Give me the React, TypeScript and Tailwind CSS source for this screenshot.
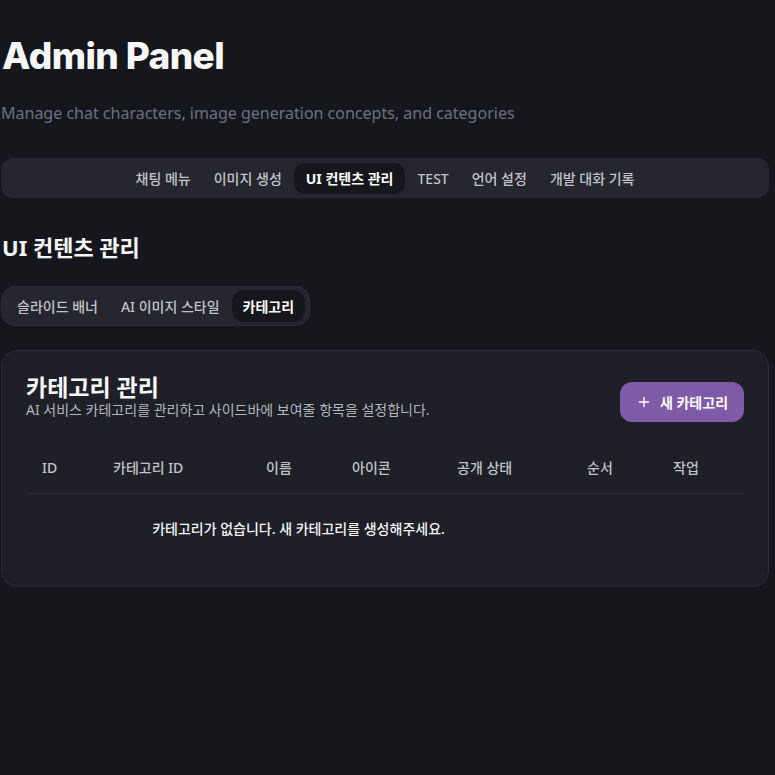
import { Plus } from 'lucide-react';

const mainTabs = ['채팅 메뉴', '이미지 생성', 'UI 컨텐츠 관리', 'TEST', '언어 설정', '개발 대화 기록'];
const subTabs = ['슬라이드 배너', 'AI 이미지 스타일', '카테고리'];
const columns = [
  { label: 'ID', w: 'w-[71px]' },
  { label: '카테고리 ID', w: 'w-[153px]' },
  { label: '이름', w: 'w-[86px]' },
  { label: '아이콘', w: 'w-[105px]' },
  { label: '공개 상태', w: 'w-[130px]' },
  { label: '순서', w: 'w-[86px]' },
  { label: '작업', w: 'w-[87px]' },
];

export default function App() {
  return (
    <div className="min-h-[775px] w-full bg-[#16171d] font-['Noto_Sans','Noto_Sans_CJK_KR',sans-serif] text-white">
      <div className="pl-[1px] pr-[6px] pt-[34px]">
        {/* Header */}
        <h1 className="ml-[1px] font-['Inter','Noto_Sans_CJK_KR',sans-serif] text-[37px] font-extrabold leading-[44px] tracking-[-0.6px] text-[#f7f7f8]">
          Admin Panel
        </h1>
        <p className="mt-[24px] text-[16px] leading-[22px] text-[#6b7180]">
          Manage chat characters, image generation concepts, and categories
        </p>

        {/* Main tabs */}
        <div className="mt-[34px] flex h-[40px] items-center justify-center gap-[1px] rounded-[12px] bg-[#25262f]">
          {mainTabs.map((t) => (
            <div
              key={t}
              className={
                t === 'UI 컨텐츠 관리'
                  ? 'flex h-[31px] items-center rounded-[10px] bg-[#16171d] px-[12px] text-[14px] font-bold text-white'
                  : 'flex h-[31px] items-center px-[11px] text-[14px] font-medium text-[#c2c3c9]'
              }
            >
              {t}
            </div>
          ))}
        </div>

        {/* Section heading */}
        <h2 className="mt-[34px] ml-[1px] text-[22px] font-bold leading-[30px] text-[#f7f7f8]">UI 컨텐츠 관리</h2>

        {/* Sub tabs */}
        <div className="mt-[24px] inline-flex h-[40px] items-center gap-[1px] rounded-[14px] border border-[#2c2d37] bg-[#25262f] px-[4px]">
          {subTabs.map((t) => (
            <div
              key={t}
              className={
                t === '카테고리'
                  ? 'flex h-[32px] items-center rounded-[12px] bg-[#16171d] px-[11px] text-[14px] font-bold text-white'
                  : 'flex h-[32px] items-center px-[11px] text-[14px] font-medium text-[#c2c3c9]'
              }
            >
              {t}
            </div>
          ))}
        </div>

        {/* Card */}
        <div className="mt-[24px] h-[237px] rounded-[16px] border border-[#2b2c36] bg-[#1e1f27] px-[24px] pt-[22px]">
          <div className="flex items-start justify-between">
            <div>
              <h3 className="text-[23px] font-bold leading-[28px] text-[#f7f7f8]">카테고리 관리</h3>
              <p className="text-[14px] leading-[18px] text-[#b4b5bd]">
                AI 서비스 카테고리를 관리하고 사이드바에 보여줄 항목을 설정합니다.
              </p>
            </div>
            <button className="mt-[9px] flex h-[40px] w-[124px] items-center justify-center gap-[8px] rounded-[12px] bg-[#7f5aa6] text-[14px] font-bold text-white">
              <Plus className="h-[16px] w-[16px]" strokeWidth={2} />
              새 카테고리
            </button>
          </div>

          <table className="mt-[21px] w-full table-fixed border-collapse">
            <thead>
              <tr className="border-b border-[#2b2c36]">
                {columns.map((c) => (
                  <th key={c.label} className={`${c.w} h-[50px] px-[16px] text-left text-[14px] font-medium text-[#c2c3c9]`}>
                    {c.label}
                  </th>
                ))}
              </tr>
            </thead>
            <tbody>
              <tr>
                <td colSpan={5} className="h-[70px] text-center text-[14px] font-medium text-[#f3f3f5]">
                  카테고리가 없습니다. 새 카테고리를 생성해주세요.
                </td>
                <td />
                <td />
              </tr>
            </tbody>
          </table>
        </div>
      </div>
    </div>
  );
}
